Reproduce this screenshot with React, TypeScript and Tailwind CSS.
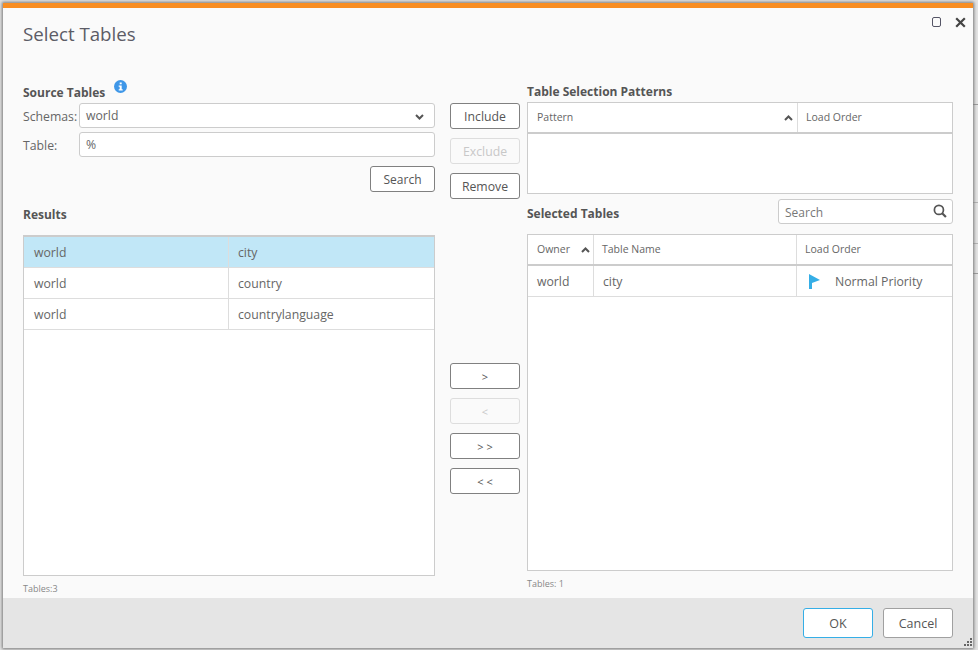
import React from "react";

const Btn = ({ children, disabled, className = "w-[70px]" }: { children: React.ReactNode; disabled?: boolean; className?: string }) => (
  <div
    className={`h-[26px] pt-[2px] flex items-center justify-center rounded-[3px] border ${
      disabled ? "border-[#dddddd] text-[#c8c8c8] bg-[#fafafa]" : "border-[#808080] text-[#555555] bg-white"
    } ${className}`}
  >
    {children}
  </div>
);

const Caret = ({ up, className = "" }: { up?: boolean; className?: string }) => (
  <svg width="9" height="6" viewBox="0 0 9 6" className={className}>
    <path
      d={up ? "M1 5 L4.5 1.5 L8 5" : "M1 1 L4.5 4.5 L8 1"}
      fill="none"
      stroke="#555555"
      strokeWidth="2"
    />
  </svg>
);

const Hd = ({ children, className = "pl-[8px]" }: { children: React.ReactNode; className?: string }) => (
  <div className={`text-[10.5px] text-[#666666] flex items-center ${className}`}>{children}</div>
);

const Row = ({ a, b, sel }: { a: string; b: string; sel?: boolean }) => (
  <div className={`flex h-[31px] pt-[2px] border-b border-[#dddddd] text-[12.25px] text-[#666666] ${sel ? "bg-[#c1e7f7]" : ""}`}>
    <div className="w-[205px] pl-[10px] flex items-center border-r border-[#dddddd] -mt-[2px] pt-[2px]">{a}</div>
    <div className="flex-1 pl-[9px] flex items-center">{b}</div>
  </div>
);

const Tick = ({ className = "" }: { className?: string }) => (
  <div className={`absolute right-0 w-[5px] h-[1px] ${className}`} />
);

export default function App() {
  return (
    <div className="relative w-[978px] h-[650px] bg-[#e4e4e4] overflow-hidden pl-[3px] pt-[3px] font-['Open_Sans',sans-serif]">
      <Tick className="top-[104px] bg-[#9c9c9c]" />
      <Tick className="top-[202px] bg-[#b4b4b4]" />
      <Tick className="top-[243px] bg-[#b4b4b4]" />
      <Tick className="top-[273px] bg-[#9c9c9c]" />
      <div className="relative w-[970px] h-[645px] bg-[#fafafa] border-t-[5px] border-[#f88d21] flex flex-col shadow-[0_0_3px_1px_#777777]">
        <div className="relative h-[590px] pl-[20px] pr-[20px]">
          <div className="pt-[12px] h-[72px] text-[18.7px] leading-[28px] text-[#5c5c66]">Select Tables</div>
          <div className="absolute top-[9px] right-[32px] w-[9px] h-[10px] border border-[#555566] rounded-[2px]" />
          <svg width="11" height="11" viewBox="0 0 11 11" className="absolute top-[9px] right-[7px]">
            <path d="M1.2 1.2 L9.8 9.8 M9.8 1.2 L1.2 9.8" stroke="#444444" strokeWidth="2.2" />
          </svg>

          <div className="flex">
            <div className="w-[412px] flex flex-col">
              <div className="h-[23px] flex text-[12px] font-bold text-[#555555]">
                <span className="pt-[4px] leading-[18px]">Source Tables</span>
                <svg width="13" height="13" viewBox="0 0 13 13" className="ml-[9px]">
                  <circle cx="6.5" cy="6.5" r="6.5" fill="#3f97e8" />
                  <rect x="5.7" y="2.5" width="2" height="1.8" fill="#ffffff" />
                  <path d="M4.7 5.5 H7.7 V9.2 H8.7 V10.4 H4.7 V9.2 H5.7 V6.7 H4.7 Z" fill="#ffffff" />
                </svg>
              </div>
              <div className="flex items-center h-[25px] text-[12.25px] text-[#666666]">
                <span className="w-[56px] pt-[3px]">Schemas:</span>
                <div className="flex-1 h-full pt-[2px] bg-white border border-[#cccccc] rounded-[3px] flex items-center justify-between pl-[6px] pr-[10px]">
                  world
                  <Caret />
                </div>
              </div>
              <div className="flex items-center h-[25px] mt-[4px] text-[12.25px] text-[#666666]">
                <span className="w-[56px] pt-[3px]">Table:</span>
                <div className="flex-1 h-full pt-[2px] bg-white border border-[#cccccc] rounded-[3px] flex items-center pl-[6px]">%</div>
              </div>
              <div className="flex justify-end mt-[9px]">
                <Btn className="w-[65px] text-[12px]">Search</Btn>
              </div>
              <div className="mt-[13px] h-[19px] text-[12px] font-bold text-[#555555] leading-[20px]">Results</div>
              <div className="mt-[11px] h-[341px] bg-white border border-[#cccccc] border-t-[2px]">
                <Row a="world" b="city" sel />
                <Row a="world" b="country" />
                <Row a="world" b="countrylanguage" />
              </div>
              <div className="mt-[6px] text-[9px] leading-[14px] text-[#888888]">Tables:3</div>
            </div>

            <div className="w-[70px] ml-[15px] flex flex-col pt-[23px]">
              <Btn className="w-[70px] text-[12.25px]">Include</Btn>
              <Btn disabled className="w-[70px] mt-[9px] text-[12.25px]">Exclude</Btn>
              <Btn className="w-[70px] mt-[9px] text-[12.25px]">Remove</Btn>
              <Btn className="w-[70px] mt-[164px] text-[11px]">&gt;</Btn>
              <Btn disabled className="w-[70px] mt-[9px] text-[11px]">&lt;</Btn>
              <Btn className="w-[70px] mt-[9px] text-[11px]">&gt; &gt;</Btn>
              <Btn className="w-[70px] mt-[9px] text-[11px]">&lt; &lt;</Btn>
            </div>

            <div className="w-[426px] ml-[7px] flex flex-col">
              <div className="h-[22px] pt-[1px] text-[12px] font-bold text-[#555555] leading-[22px]">Table Selection Patterns</div>
              <div className="h-[92px] bg-white border border-[#cccccc]">
                <div className="flex h-[31px] border-b-[2px] border-[#cccccc]">
                  <Hd className="w-[270px] pl-[9px] pr-[4px] border-r border-[#dddddd] justify-between">
                    Pattern
                    <Caret up />
                  </Hd>
                  <Hd>Load Order</Hd>
                </div>
              </div>
              <div className="flex items-center justify-between h-[25px] mt-[5px]">
                <span className="text-[12px] font-bold text-[#555555] pt-[5px]">Selected Tables</span>
                <div className="w-[175px] h-full pt-[2px] bg-white border border-[#cccccc] rounded-[3px] flex items-center justify-between pl-[6px] pr-[5px] text-[12px] text-[#777777]">
                  Search
                  <svg width="14" height="14" viewBox="0 0 13 13" className="-mt-[3px]">
                    <circle cx="5.5" cy="5.5" r="4.2" fill="none" stroke="#555555" strokeWidth="1.6" />
                    <path d="M8.5 8.5 L12 12" stroke="#555555" strokeWidth="2" />
                  </svg>
                </div>
              </div>
              <div className="mt-[10px] h-[337px] bg-white border border-[#cccccc]">
                <div className="flex h-[31px] border-b-[2px] border-[#cccccc]">
                  <Hd className="w-[66px] pl-[9px] pr-[3px] border-r border-[#dddddd] justify-between">
                    Owner
                    <Caret up />
                  </Hd>
                  <Hd className="w-[203px] pl-[8px] border-r border-[#dddddd]">Table Name</Hd>
                  <Hd>Load Order</Hd>
                </div>
                <div className="flex h-[31px] border-b border-[#dddddd] text-[12.25px] text-[#666666]">
                  <div className="w-[66px] pl-[9px] pt-[2px] flex items-center border-r border-[#dddddd]">world</div>
                  <div className="w-[203px] pl-[9px] pt-[2px] flex items-center border-r border-[#dddddd]">city</div>
                  <div className="flex-1 pl-[12px] flex items-center">
                    <svg width="11" height="15" viewBox="0 0 11 15">
                      <path d="M0 0 L11 6 L3 9 V15 H0 Z" fill="#35aee6" />
                    </svg>
                    <span className="ml-[15px] pt-[2px]">Normal Priority</span>
                  </div>
                </div>
              </div>
              <div className="mt-[6px] text-[9px] leading-[14px] text-[#888888]">Tables: 1</div>
            </div>
          </div>
        </div>

        <div className="relative flex-1 bg-[#e5e5e5] flex items-start justify-end gap-[10px] pt-[10px] pr-[20px]">
          <div className="w-[70px] h-[30px] pt-[3px] bg-white border border-[#35aee6] rounded-[3px] flex items-center justify-center text-[12.5px] text-[#555555]">OK</div>
          <div className="w-[70px] h-[30px] pt-[3px] bg-white border border-[#a0a0a0] rounded-[3px] flex items-center justify-center text-[12.5px] text-[#555555]">Cancel</div>
          <svg width="9" height="9" viewBox="0 0 9 9" className="absolute right-[1px] bottom-[1px]">
            <path d="M7 0h2v2H7zM4 3h2v2H4zM7 3h2v2H7zM1 6h2v2H1zM4 6h2v2H4zM7 6h2v2H7z" fill="#666666" />
          </svg>
        </div>
      </div>
    </div>
  );
}
